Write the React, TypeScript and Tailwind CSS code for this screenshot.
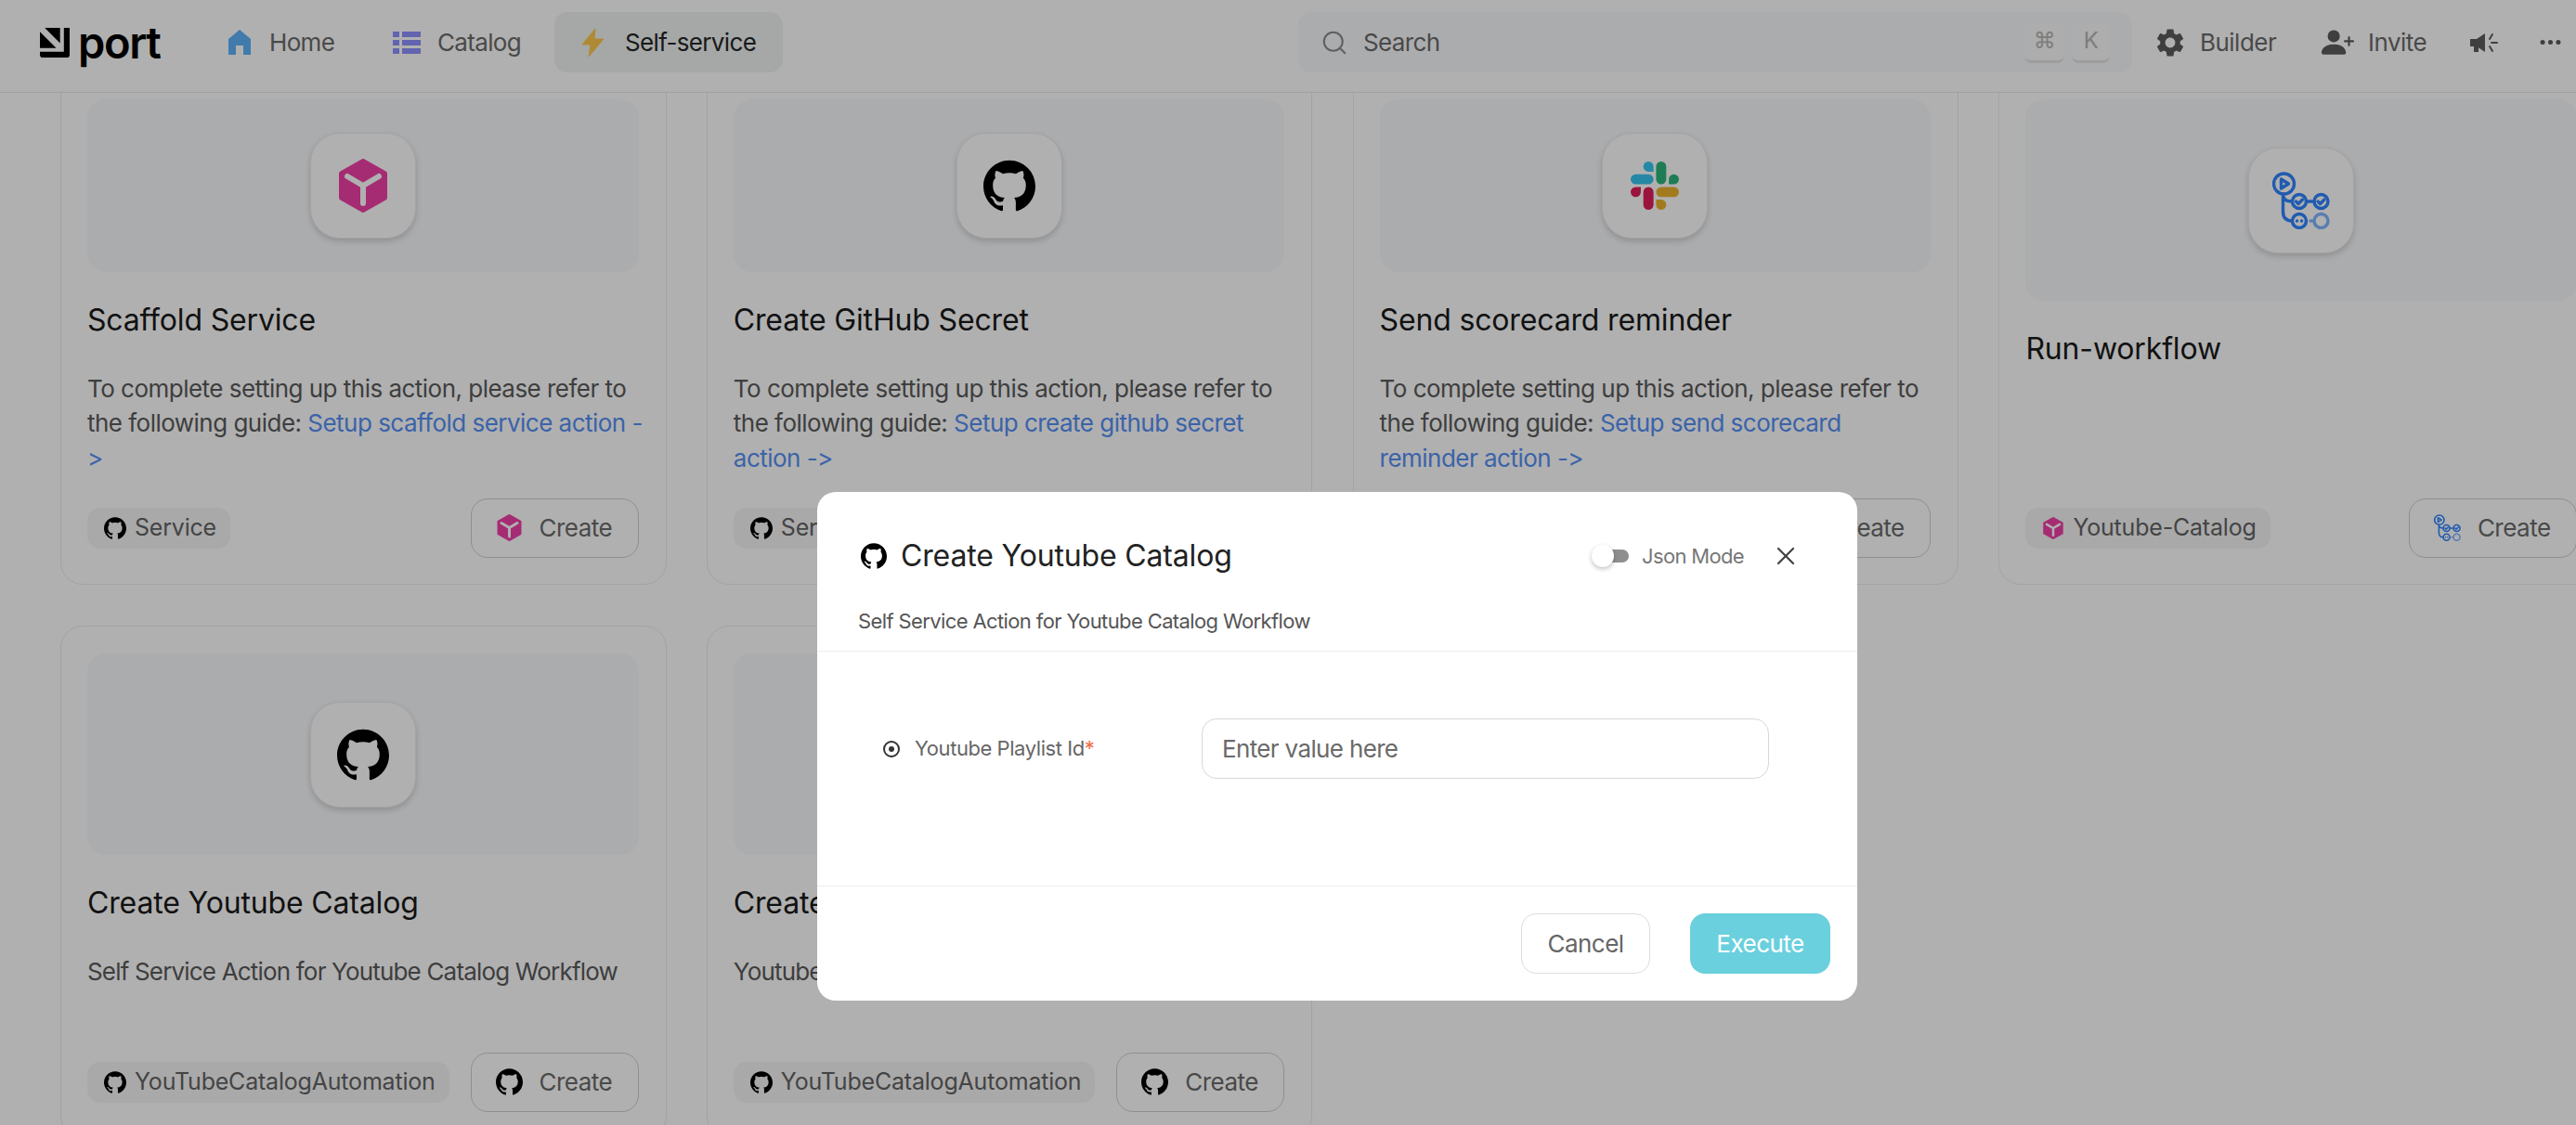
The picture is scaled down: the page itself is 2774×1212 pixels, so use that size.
import React from "react";
import { Search, X } from "lucide-react";
import { SiGithub } from "react-icons/si";
import { MdSettings } from "react-icons/md";
import { BsPersonPlusFill, BsThreeDots } from "react-icons/bs";

function CubeIcon({ className }: { className?: string }) {
  return (
    <svg viewBox="0 0 52 58" className={className}>
      <polygon points="26,3 49,16 49,42 26,55 3,42 3,16" fill="#ef41a7" stroke="#ef41a7" strokeWidth="6" strokeLinejoin="round" />
      <path d="M9 19 L26 29 L43 19 M26 29 V48" fill="none" stroke="#ffffff" strokeWidth="6" strokeLinecap="round" strokeLinejoin="round" />
    </svg>
  );
}

function SlackIcon({ className }: { className?: string }) {
  return (
    <svg viewBox="0 0 24 24" className={className}>
      <path fill="#E01E5A" d="M5.042 15.165a2.528 2.528 0 0 1-2.52 2.523A2.528 2.528 0 0 1 0 15.165a2.527 2.527 0 0 1 2.522-2.52h2.52v2.52zM6.313 15.165a2.527 2.527 0 0 1 2.521-2.52 2.527 2.527 0 0 1 2.521 2.52v6.313A2.528 2.528 0 0 1 8.834 24a2.528 2.528 0 0 1-2.521-2.522v-6.313z" />
      <path fill="#36C5F0" d="M8.834 5.042a2.528 2.528 0 0 1-2.521-2.52A2.528 2.528 0 0 1 8.834 0a2.528 2.528 0 0 1 2.521 2.522v2.52H8.834zM8.834 6.313a2.528 2.528 0 0 1 2.521 2.521 2.528 2.528 0 0 1-2.521 2.521H2.522A2.528 2.528 0 0 1 0 8.834a2.528 2.528 0 0 1 2.522-2.521h6.312z" />
      <path fill="#2EB67D" d="M18.956 8.834a2.528 2.528 0 0 1 2.522-2.521A2.528 2.528 0 0 1 24 8.834a2.528 2.528 0 0 1-2.522 2.521h-2.522V8.834zM17.688 8.834a2.528 2.528 0 0 1-2.523 2.521 2.527 2.527 0 0 1-2.52-2.521V2.522A2.527 2.527 0 0 1 15.165 0a2.528 2.528 0 0 1 2.523 2.522v6.312z" />
      <path fill="#ECB22E" d="M15.165 18.956a2.528 2.528 0 0 1 2.523 2.522A2.528 2.528 0 0 1 15.165 24a2.527 2.527 0 0 1-2.52-2.522v-2.522h2.52zM15.165 17.688a2.527 2.527 0 0 1-2.52-2.523 2.526 2.526 0 0 1 2.52-2.52h6.313A2.527 2.527 0 0 1 24 15.165a2.528 2.528 0 0 1-2.522 2.523h-6.313z" />
    </svg>
  );
}

function WorkflowIcon({ className }: { className?: string }) {
  return (
    <svg viewBox="0 0 62 62" className={className} fill="none" stroke="#2f84ff" strokeWidth="3.4" strokeLinecap="round" strokeLinejoin="round">
      <circle cx="12.5" cy="13" r="11" />
      <path d="M9.5 8 L17.5 13 L9.5 18 Z" />
      <path d="M11.5 24 V43 Q11.5 53 21.5 53 M11.5 24 V25 Q11.5 32 21.5 32" />
      <circle cx="29" cy="32" r="7.5" />
      <circle cx="52.5" cy="32" r="7.5" />
      <path d="M36.5 32 H45" />
      <path d="M25.5 32 L28 34.5 L32.5 30 M49 32 L51.5 34.5 L56 30" />
      <circle cx="29" cy="53" r="7.5" />
      <path d="M26.5 53 H26.6 M31.5 53 H31.6" />
      <g opacity="0.6">
        <circle cx="52.5" cy="53" r="7.5" />
        <path d="M41 53 H43" />
      </g>
    </svg>
  );
}

function GithubIcon({ className }: { className?: string }) {
  return <SiGithub className={className} color="#000000" />;
}

type IconKind = "cube" | "github" | "slack" | "workflow";

function BrandIcon({ kind, className }: { kind: IconKind; className?: string }) {
  if (kind === "cube") return <CubeIcon className={className} />;
  if (kind === "slack") return <SlackIcon className={className} />;
  if (kind === "workflow") return <WorkflowIcon className={className} />;
  return <GithubIcon className={className} />;
}

type Card = {
  title: string;
  icon: IconKind;
  text?: string;
  link?: string;
  tag: string;
  tagIcon: IconKind;
};

const cards: Card[] = [
  { title: "Scaffold Service", icon: "cube", text: "To complete setting up this action, please refer to the following guide: ", link: "Setup scaffold service action ->", tag: "Service", tagIcon: "github" },
  { title: "Create GitHub Secret", icon: "github", text: "To complete setting up this action, please refer to the following guide: ", link: "Setup create github secret action ->", tag: "Service", tagIcon: "github" },
  { title: "Send scorecard reminder", icon: "slack", text: "To complete setting up this action, please refer to the following guide: ", link: "Setup send scorecard reminder action ->", tag: "Service", tagIcon: "github" },
  { title: "Run-workflow", icon: "workflow", tag: "Youtube-Catalog", tagIcon: "cube" },
  { title: "Create Youtube Catalog", icon: "github", text: "Self Service Action for Youtube Catalog Workflow", tag: "YouTubeCatalogAutomation", tagIcon: "github" },
  { title: "Create Youtube Playlist", icon: "github", text: "Youtube Playlist Self Service Action", tag: "YouTubeCatalogAutomation", tagIcon: "github" },
];

function ActionCard({ card }: { card: Card }) {
  const tileIcon =
    card.icon === "cube" ? "w-[52px] h-[58px]" : card.icon === "workflow" ? "w-[62px] h-[62px]" : card.icon === "slack" ? "w-[52px] h-[52px]" : "w-[56px] h-[56px]";
  const textTracking = card.link ? "tracking-[-0.02em]" : "tracking-[-0.0315em]";
  return (
    <div className="flex h-[553px] min-w-0 flex-col rounded-[24px] border border-[#ececec] pt-[29px] pr-[29px] pb-[28px] pl-[28px]">
      <div className="flex min-h-0 flex-1 items-center justify-center rounded-[20px] bg-[#f8f9fc]">
        <div className="flex h-[114px] w-[114px] items-center justify-center rounded-[32px] border border-[#eeeeee] bg-white shadow-[0_3px_6px_rgba(0,0,0,0.16)]">
          <BrandIcon kind={card.icon} className={tileIcon} />
        </div>
      </div>
      <div className="mt-[30px] h-[44px] text-[32px] leading-[44px] tracking-[-0.005em] text-[#1a1a1a]">{card.title}</div>
      <div className={`mt-[33px] mr-[-6px] min-h-[81px] text-[26px] leading-[37.5px] text-[#5a5a5a] ${textTracking}`}>
        {card.text}
        {card.link && <span className="text-[#5690f5]">{card.link}</span>}
      </div>
      <div className="mt-[25px] flex h-[64px] shrink-0 items-center justify-between">
        <div className="flex h-[44px] items-center gap-[9px] rounded-[14px] bg-[#f5f5f5] pr-[15px] pl-[18px] text-[25px] tracking-[-0.008em] whitespace-nowrap text-[#636363]">
          <BrandIcon kind={card.tagIcon} className="h-[24px] w-[24px]" />
          {card.tag}
        </div>
        <div className="flex h-[64px] w-[181px] shrink-0 items-center gap-[18px] rounded-[18px] border border-[#cfcfcf] pb-[1px] pl-[26px] text-[26px] tracking-[-0.02em] text-[#6b6b6b]">
          <BrandIcon kind={card.icon} className="h-[29px] w-[29px]" />
          Create
        </div>
      </div>
    </div>
  );
}

function Header() {
  return (
    <header className="relative z-10 flex h-[100px] shrink-0 items-center border-b border-[#e8e8e8] bg-white pb-[8px] pl-[43px]">
      <div className="flex flex-1 items-center">
        <div className="flex w-[173px] items-center">
          <svg viewBox="0 0 31 31" className="h-[32px] w-[32px]">
            <path d="M25 0 H31 V28 Q31 31 28 31 H3 Q0 31 0 28 V25 H25 Z M5 0 H21 V16 Z M0 4 L17 21 H0 Z" fill="#000000" />
          </svg>
          <span className="ml-[9px] text-[47px] leading-none font-semibold tracking-[-0.03em] text-black">port</span>
        </div>
        <div className="flex h-[65px] w-[173px] items-center gap-[20px] rounded-[14px] pl-[30px] text-[26px] tracking-[-0.025em] text-[#6b6b6b]">
          <svg viewBox="0 0 24 27" className="h-[27px] w-[24px]">
            <path d="M12 0 L24 10 V27 H16 V17 H8 V27 H0 V10 Z" fill="#5fb3fa" />
          </svg>
          Home
        </div>
        <div className="ml-[4px] flex h-[65px] w-[197px] items-center gap-[18px] rounded-[14px] pl-[30px] text-[26px] tracking-[-0.025em] text-[#6b6b6b]">
          <svg viewBox="0 0 30 24" className="h-[24px] w-[30px]" fill="#8e91ff">
            <rect x="0" y="0" width="7" height="6" />
            <rect x="10" y="0" width="20" height="6" />
            <rect x="0" y="9" width="7" height="6" />
            <rect x="10" y="9" width="20" height="6" />
            <rect x="0" y="18" width="7" height="6" />
            <rect x="10" y="18" width="20" height="6" />
          </svg>
          Catalog
        </div>
        <div className="ml-[7px] flex h-[65px] w-[246px] items-center gap-[23px] rounded-[14px] bg-[#f0f3f2] pl-[30px] text-[26px] tracking-[-0.025em] text-[#262626]">
          <svg viewBox="0 0 23 30" className="h-[30px] w-[23px]">
            <path d="M14 0 L0 17 H9 L7 30 L23 11 H13 Z" fill="#fdc94e" stroke="#fdc94e" strokeLinejoin="round" />
          </svg>
          Self-service
        </div>
      </div>
      <div className="flex h-[65px] w-[898px] shrink-0 items-center rounded-[14px] bg-[#f8f9fc] pr-[24px] pl-[24px] text-[26px] tracking-[-0.025em] text-[#6b6b6b]">
        <Search className="h-[30px] w-[30px] text-[#8a8a8a]" strokeWidth={1.6} />
        <span className="ml-[16px] flex-1">Search</span>
        <div className="flex gap-[8px]">
          <span className="flex h-[44px] w-[43px] items-center justify-center rounded-[8px] border-b-[3px] border-[#e4e4e4] bg-[#fbfbfb] font-['DejaVu_Sans',sans-serif] text-[24px] text-[#b5b5b5]">⌘</span>
          <span className="flex h-[44px] w-[41px] items-center justify-center rounded-[8px] border-b-[3px] border-[#e4e4e4] bg-[#fbfbfb] text-[24px] text-[#b5b5b5]">K</span>
        </div>
      </div>
      <div className="flex w-[478px] shrink-0 items-center pl-[26px] text-[26px] tracking-[-0.02em] text-[#6b6b6b]">
        <div className="flex w-[178px] items-center gap-[17px]">
          <MdSettings className="h-[36px] w-[36px] text-[#5c5c5c]" style={{ margin: "-3px" }} />
          Builder
        </div>
        <div className="flex w-[160px] items-center gap-[15px]">
          <BsPersonPlusFill className="h-[35px] w-[35px] text-[#5c5c5c]" />
          Invite
        </div>
        <svg viewBox="0 0 30 24" className="h-[24px] w-[30px] text-[#5c5c5c]">
          <path d="M0 8 H7 L16 2 V22 L7 16 H0 Z M4 16 H9 V22 H4 Z" fill="currentColor" />
          <path d="M21 8 L24 3 M23 12 H29 M21 16 L24 21" stroke="currentColor" strokeWidth="2" strokeLinecap="round" fill="none" />
        </svg>
        <BsThreeDots className="ml-[43px] h-[27px] w-[27px] text-[#5c5c5c]" />
      </div>
    </header>
  );
}

function Modal() {
  return (
    <div className="absolute top-[530px] left-[880px] z-30 flex h-[548px] w-[1120px] flex-col rounded-[20px] bg-white text-[#4a4a4a]">
      <div className="h-[172px] shrink-0 border-b border-[#ececec] pt-[53px] pr-[61px] pl-[44px]">
        <div className="flex h-[32px] items-center">
          <GithubIcon className="ml-[3px] h-[28px] w-[28px]" />
          <span className="ml-[15px] text-[32px] tracking-[-0.005em] text-[#222222]">Create Youtube Catalog</span>
          <div className="relative ml-auto h-[14px] w-[22px] translate-x-[-1px] rounded-r-full bg-[#8f8f8f]">
            <span className="absolute top-[-5px] left-[-18px] h-[24px] w-[24px] rounded-full bg-white shadow-[0_2px_5px_rgba(0,0,0,0.25)]" />
          </div>
          <span className="ml-[13px] text-[22px] tracking-[-0.03em] text-[#777777]">Json Mode</span>
          <X className="ml-[29px] h-[32px] w-[32px] text-[#444444]" strokeWidth={1.7} />
        </div>
        <div className="mt-[38px] text-[22px] leading-[32px] tracking-[-0.028em] text-[#555555]">Self Service Action for Youtube Catalog Workflow</div>
      </div>
      <div className="flex h-[253px] shrink-0 items-start border-b border-[#ececec] pt-[72px] pl-[71px]">
        <div className="flex h-[65px] w-[343px] items-center gap-[16px] text-[22px] tracking-[-0.02em] text-[#666666]">
          <span className="flex h-[18px] w-[18px] items-center justify-center rounded-full border-2 border-[#333333]">
            <span className="h-[6px] w-[6px] rounded-full bg-[#333333]" />
          </span>
          <span>
            Youtube Playlist Id<span className="text-[#f06a45]">*</span>
          </span>
        </div>
        <div className="flex h-[65px] w-[611px] items-center rounded-[16px] border border-[#d8d8d8] pl-[21px] text-[26px] tracking-[-0.025em] text-[#6a6a6a]">Enter value here</div>
      </div>
      <div className="flex flex-1 items-start justify-end gap-[43px] pt-[29px] pr-[29px] text-[26px] tracking-[-0.02em]">
        <div className="flex h-[65px] w-[139px] items-center justify-center rounded-[16px] border border-[#dcdcdc] text-[#666666]">Cancel</div>
        <div className="flex h-[65px] w-[151px] items-center justify-center rounded-[16px] bg-[#6ad0dd] text-white">Execute</div>
      </div>
    </div>
  );
}

export default function App() {
  return (
    <div className="relative flex h-[1212px] w-[2774px] flex-col overflow-hidden bg-white font-[Inter,sans-serif]">
      <Header />
      <main className="min-h-0 flex-1 overflow-hidden">
        <div className="mt-[-23px] grid w-[2830px] grid-cols-[repeat(4,652.5px)] gap-x-[43.3px] gap-y-[44px] pl-[65px]">
          {cards.map((c) => (
            <ActionCard key={c.title} card={c} />
          ))}
        </div>
      </main>
      <div className="absolute inset-0 z-20 bg-black/[0.31]" />
      <Modal />
    </div>
  );
}
